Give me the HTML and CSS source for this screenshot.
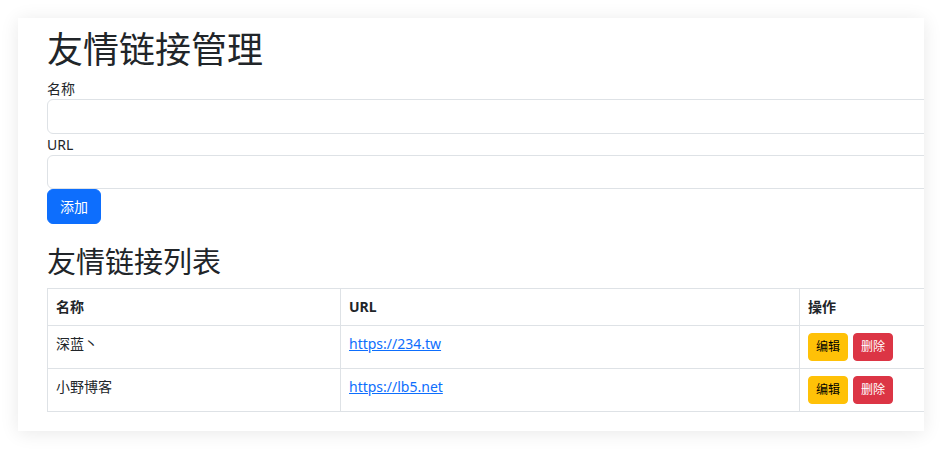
FILE: index.html
```html
<!DOCTYPE html>
<html lang="zh-CN">
<head>
<meta charset="utf-8">
<title>友情链接管理</title>
<link rel="stylesheet" href="styles.css">
</head>
<body>
<div class="card">
  <div class="inner">
    <h1 class="title">友情链接管理</h1>
    <form class="form">
      <label class="label" for="name">名称</label>
      <input class="input" id="name" type="text">
      <label class="label" for="url">URL</label>
      <input class="input" id="url" type="text">
      <div><button type="button" class="btn btn-primary">添加</button></div>
    </form>
    <h2 class="subtitle">友情链接列表</h2>
    <table class="table">
      <colgroup>
        <col class="c1"><col class="c2"><col class="c3">
      </colgroup>
      <thead>
        <tr><th>名称</th><th>URL</th><th>操作</th></tr>
      </thead>
      <tbody>
        <tr>
          <td>深蓝丶</td>
          <td><a class="link" href="#">https://234.tw</a></td>
          <td><div class="actions"><button class="btn-sm btn-warning">编辑</button><button class="btn-sm btn-danger">删除</button></div></td>
        </tr>
        <tr>
          <td>小野博客</td>
          <td><a class="link" href="#">https://lb5.net</a></td>
          <td><div class="actions"><button class="btn-sm btn-warning">编辑</button><button class="btn-sm btn-danger">删除</button></div></td>
        </tr>
      </tbody>
    </table>
  </div>
</div>
</body>
</html>
```
FILE: styles.css
```css
* { box-sizing: border-box; }
html, body { margin: 0; padding: 0; background: #fff; }
body {
  padding: 18px;
  font-family: "Noto Sans", "Noto Sans CJK SC", sans-serif;
  font-size: 14px;
  line-height: 1.5;
  color: #212529;
}
.card {
  height: 413px;
  background: #fff;
  box-shadow: 0 2px 18px rgba(0,0,0,0.09);
  overflow: hidden;
  padding: 10px 0 20px 29px;
}
.inner { width: 1000px; display: flex; flex-direction: column; }
.title {
  margin: 0 0 6px 0;
  font-size: 36px;
  line-height: 44px;
  font-weight: 400;
}
.form { display: flex; flex-direction: column; margin: 0; }
.label { display: block; line-height: 21px; }
.input {
  display: block;
  width: 100%;
  height: 34.5px;
  border: 1px solid #dee2e6;
  border-radius: 6px;
  padding: 6px 12px;
  font: inherit;
}
.btn {
  font: inherit;
  border: 1px solid transparent;
  border-radius: 6px;
  padding: 6px 12px;
  line-height: 21px;
  cursor: pointer;
}
.btn-primary { background: #0d6efd; border-color: #0d6efd; color: #fff; }
.subtitle {
  margin: 20px 0 8px 0;
  font-size: 29px;
  line-height: 35.6px;
  font-weight: 400;
}
.table {
  border-collapse: collapse;
  width: 960px;
  table-layout: fixed;
}
.c1 { width: 293px; }
.c2 { width: 459px; }
.c3 { width: 208px; }
.table th, .table td {
  border: 1px solid #dee2e6;
  padding: 7px 8px 8px 8px;
  text-align: left;
  vertical-align: top;
  line-height: 21px;
}
.table td { padding-top: 7px; padding-bottom: 7px; }
.table th { font-weight: 700; }
.link { color: #0d6efd; text-decoration: underline; }
.actions { display: flex; gap: 5px; }
.btn-sm {
  font-family: inherit;
  font-size: 12px;
  line-height: 18px;
  padding: 4px 7px;
  border: 1px solid transparent;
  border-radius: 4px;
  height: 28px;
  cursor: pointer;
}
.btn-warning { background: #ffc107; border-color: #ffc107; color: #000; }
.btn-danger { background: #dc3545; border-color: #dc3545; color: #fff; }
```
